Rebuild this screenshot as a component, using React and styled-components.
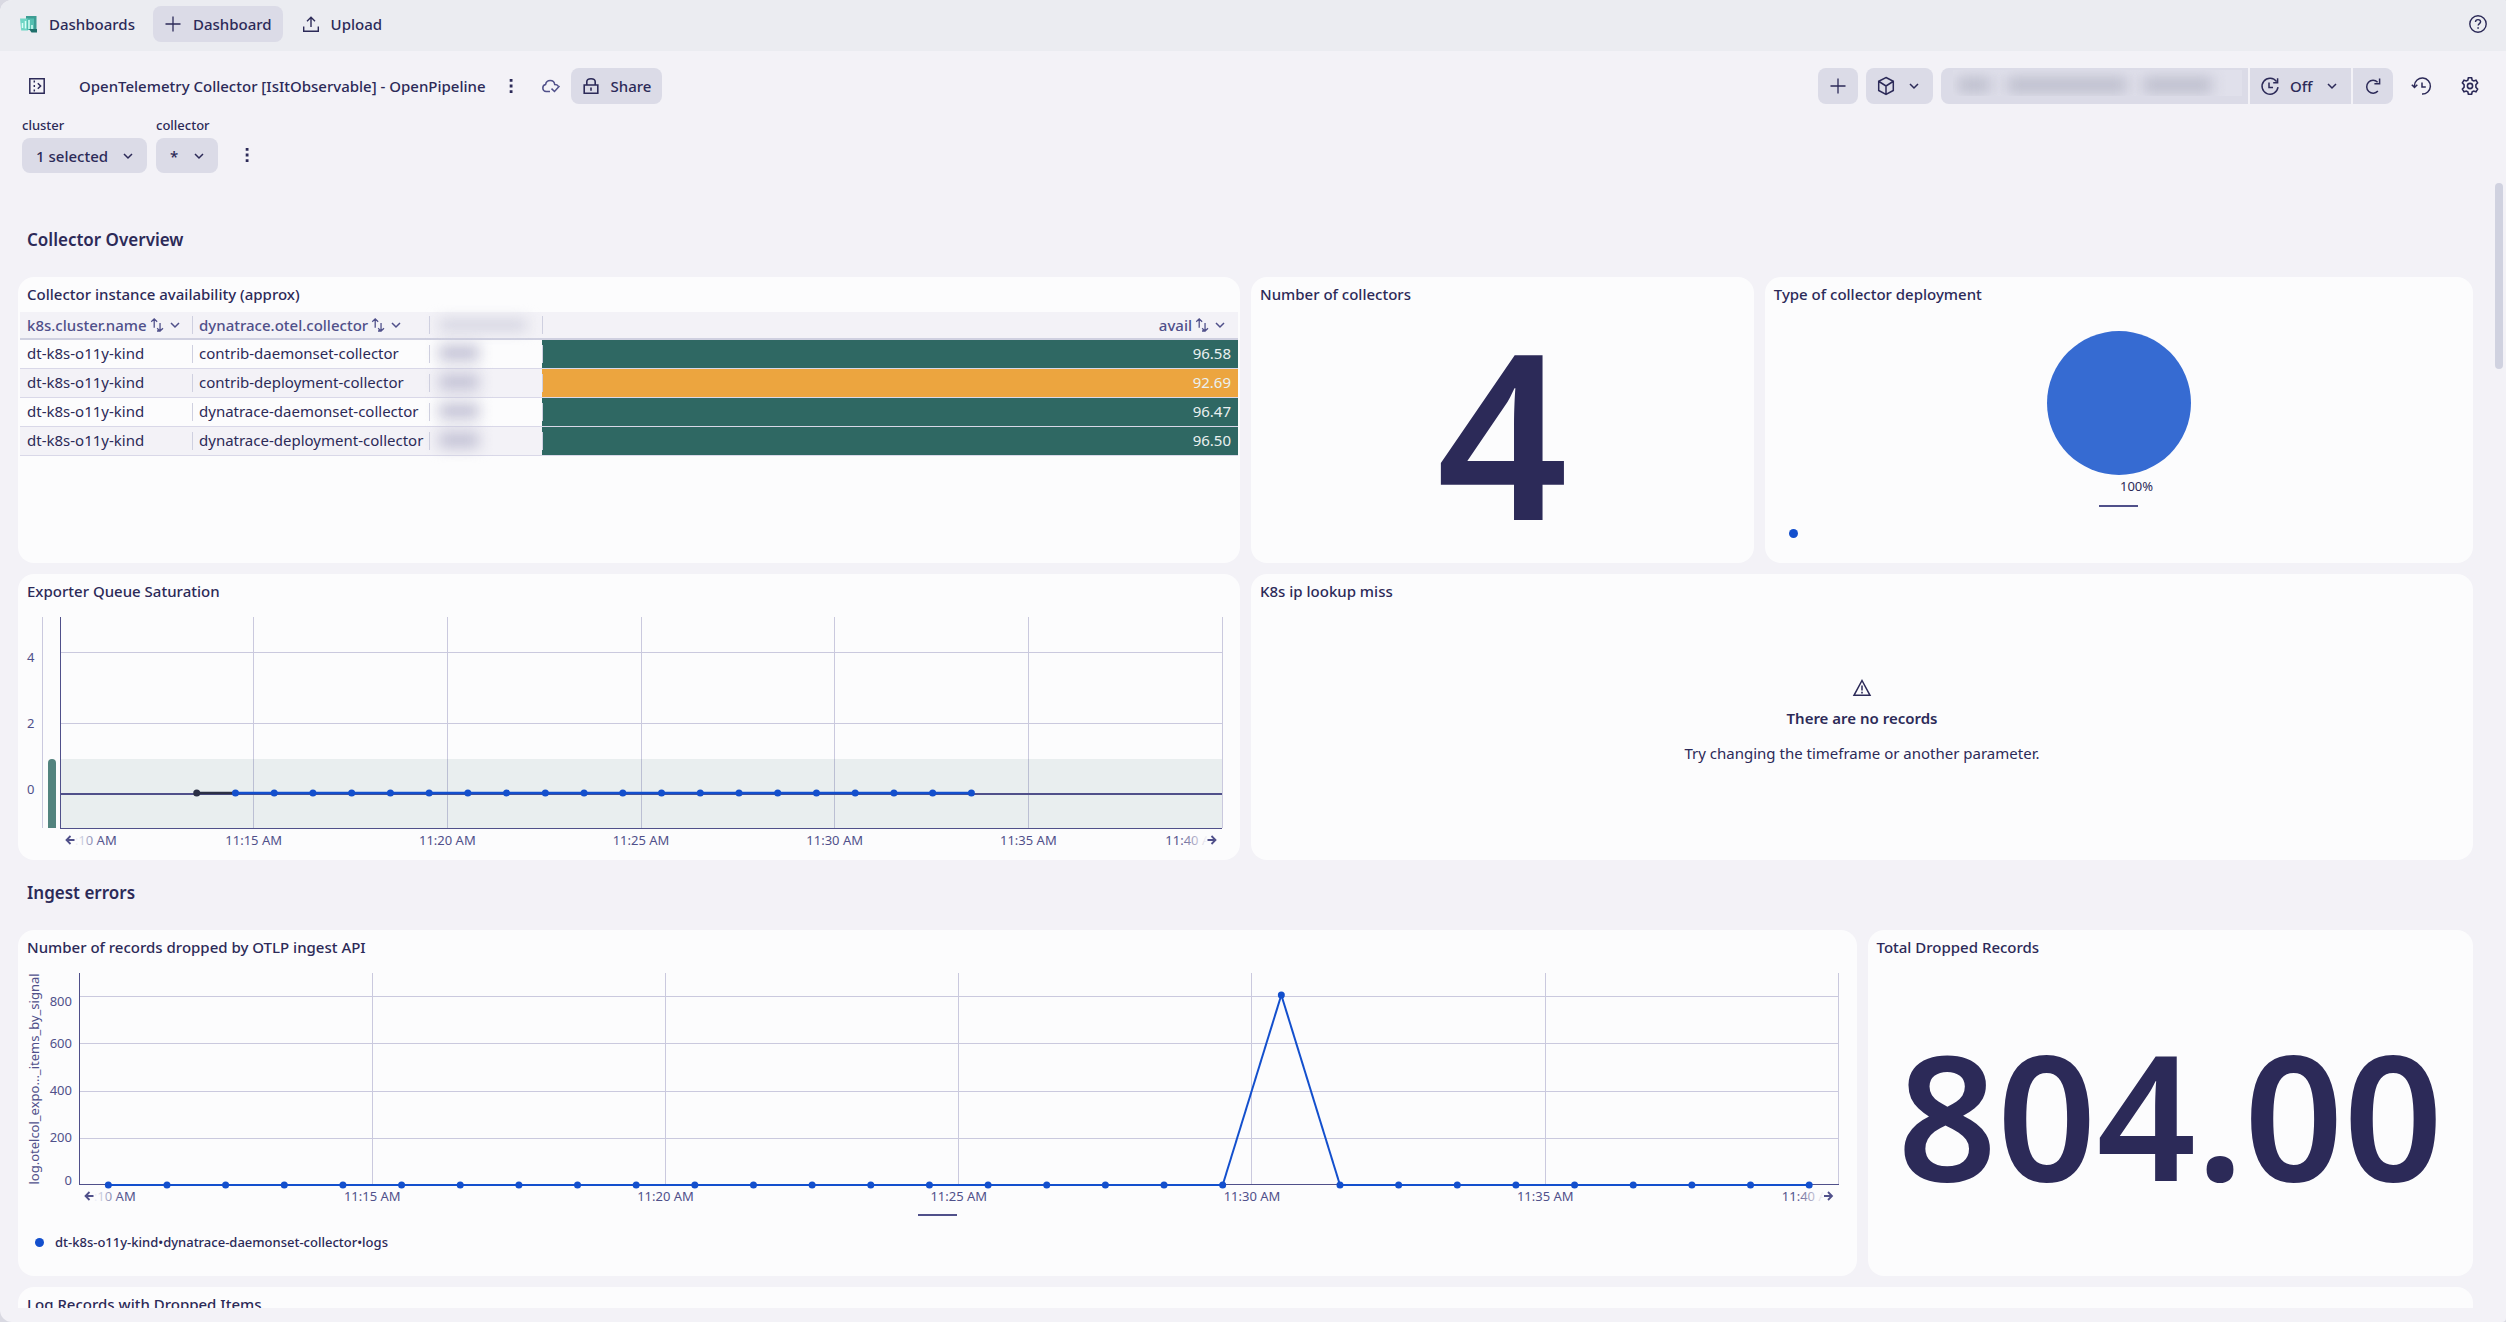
import styled, { createGlobalStyle } from 'styled-components';

const GlobalStyle = createGlobalStyle`
  :root {
    --ink: #2c2a58;
    --ink-soft: #50508a;
    --page: #f3f2f7;
    --topbar: #ebecf1;
    --tile: #fcfcfd;
    --control: #dbdbe7;
    --line: #cfd0e0;
    --grid: #cac9de;
    --blue: #134fcd;
    --green: #2f6863;
    --orange: #eca53f;
  }

  * {
    box-sizing: border-box;
  }

  body {
    margin: 0;
    background: #d9d9e2;
    color: var(--ink);
    font-family: 'Noto Sans', sans-serif;
    font-size: 15px;
    line-height: 20px;
  }

  button,
  select {
    font: inherit;
    color: inherit;
  }
`;

const AppFrame = styled.div`
  display: flex;
  flex-direction: column;
  height: 100vh;
  overflow: hidden;
  background: var(--page);
  border-radius: 12px 2px 4px 12px;
`;

const TopBar = styled.header`
  display: flex;
  align-items: center;
  gap: 8px;
  height: 51px;
  padding: 0 8px 3px;
  background: var(--topbar);
`;

const Spacer = styled.div`
  flex: 1;
`;

const AppLink = styled.a`
  display: flex;
  align-items: center;
  gap: 10px;
  height: 36px;
  padding: 0 10px 0 11px;
  color: inherit;
  font-weight: 500;
  text-decoration: none;
`;

const Button = styled.button`
  display: flex;
  align-items: center;
  justify-content: center;
  gap: 10px;
  height: 36px;
  padding: 0 11px 0 10px;
  border: 0;
  border-radius: ${({ $radius = '8px' }) => $radius};
  background: ${({ $quiet }) => ($quiet ? 'transparent' : 'var(--control)')};
  font-weight: 500;
`;

const IconButton = styled(Button)`
  width: 40px;
  padding: 0;
`;

const Toolbar = styled.div`
  display: flex;
  align-items: center;
  padding: 17px 16px 0 17px;
`;

const DashboardTitle = styled.h1`
  margin: 0 5px 0 22px;
  font-size: 15px;
  font-weight: 500;
`;

const ToolGroup = styled.div`
  display: flex;
  gap: ${({ $gap }) => $gap};
  margin-right: ${({ $after = '0' }) => $after};
`;

const Timeframe = styled(Button)`
  width: 307px;
  padding: 0 6px 6px 12px;
`;

const HiddenTime = styled.span`
  display: flex;
  flex: 1;
  align-items: center;
  gap: 16px;
  height: 26px;
  padding: 4px 30px 0 4px;
  background: rgba(255, 255, 255, 0.16);
  overflow: hidden;
`;

const Smudge = styled.span`
  flex: ${({ $grow = 1 }) => $grow};
  height: ${({ $height = '16px' }) => $height};
  background: ${({ $color = '#bdbecd' }) => $color};
  filter: blur(7px);
`;

const Filters = styled.div`
  display: flex;
  align-items: flex-end;
  gap: 9px;
  padding: 12px 22px 10px;
`;

const Field = styled.div`
  display: flex;
  flex-direction: column;
  gap: 4px;
`;

const FieldLabel = styled.label`
  font-size: 13px;
  font-weight: 500;
  line-height: 18px;
`;

/* icon, select and chevron share one grid cell */
const SelectShell = styled.span`
  display: grid;
  align-items: center;

  > * {
    grid-area: 1 / 1;
  }

  > svg {
    pointer-events: none;
    z-index: 1;
    justify-self: end;
    margin-right: 11px;
  }

  > svg.lead {
    justify-self: start;
    margin-left: 10px;
  }
`;

const Select = styled.select`
  appearance: none;
  width: ${({ $width }) => $width};
  height: ${({ $height = '35px' }) => $height};
  padding: 0 0 0 ${({ $inset = '14px' }) => $inset};
  border: 0;
  border-radius: ${({ $radius = '8px' }) => $radius};
  background: var(--control);
  font-weight: 500;
`;

const Scroller = styled.div`
  display: flex;
  flex: 1;
  min-height: 0;
  margin-bottom: 14px;
  overflow: hidden;
`;

const Board = styled.main`
  display: grid;
  flex: 1;
  grid-template-columns: repeat(24, minmax(0, 1fr));
  grid-template-rows: 48px 286px 286px 48px 346px 346px;
  gap: 11px;
  padding: 35px 22px 0 18px;
`;

const ScrollThumb = styled.div`
  width: 8px;
  height: 186px;
  margin-right: 3px;
  border-radius: 4px;
  background: #d0d2e0;
`;

const SectionTitle = styled.h2`
  grid-column: 1 / -1;
  margin: 0;
  padding-left: 9px;
  font-size: 17px;
  font-weight: 600;
  line-height: 43px;
`;

const TileBox = styled.section`
  display: flex;
  flex-direction: column;
  grid-column: span ${({ $span }) => $span};
  min-width: 0;
  border-radius: 16px;
  background: var(--tile);
`;

const TileTitle = styled.h3`
  margin: 0;
  padding: 0 0 1px 9px;
  font-size: 15px;
  font-weight: 500;
  line-height: 34px;
`;

const Table = styled.table`
  width: calc(100% - 4px);
  margin: 0 2px;
  border-collapse: separate;
  border-spacing: 0;
  table-layout: fixed;
`;

const cellRule = 'linear-gradient(var(--line), var(--line)) no-repeat left center / 1px 18px';

const HeadCell = styled.th`
  width: ${({ $width }) => $width};
  height: 28px;
  padding: 0 7px;
  border-bottom: 2px solid var(--line);
  background: ${({ $ruled }) => ($ruled ? `${cellRule}, var(--page)` : 'var(--page)')};
  color: var(--ink-soft);
  font-weight: 500;
  text-align: left;
`;

const HeadContent = styled.span`
  display: flex;
  align-items: center;
  justify-content: ${({ $end }) => ($end ? 'flex-end' : 'flex-start')};
  gap: 2px;
  padding-right: ${({ $end }) => ($end ? '3px' : '0')};
`;

const Row = styled.tr`
  background: ${({ $striped }) => ($striped ? 'var(--page)' : 'var(--tile)')};
`;

const Cell = styled.td`
  height: 29px;
  padding: 0 7px 2px;
  border-bottom: 1px solid #d9d8e8;
  background: ${({ $ruled }) => ($ruled ? cellRule : 'none')};
  white-space: nowrap;
`;

const ValueCell = styled(Cell)`
  background: ${({ $color }) => `${cellRule}, ${$color}`};
  color: #eaf0f0;
  text-align: right;
`;

const MaskedCell = styled.span`
  display: flex;
  width: ${({ $wide }) => ($wide ? '88px' : '40px')};
  margin-left: 3px;
`;

const BigNumber = styled.div`
  display: flex;
  flex: 1;
  align-items: center;
  justify-content: center;
  padding-bottom: 14px;
  font-size: ${({ $size }) => $size};
  font-weight: 600;
  line-height: 1;
`;

const PieBody = styled.div`
  display: flex;
  flex-direction: column;
  align-items: center;
  padding-top: 19px;
`;

const Handle = styled.div`
  align-self: center;
  width: 39px;
  height: 2px;
  margin-top: ${({ $top }) => $top};
  background: #50508a;
`;

const Legend = styled.div`
  display: flex;
  align-items: center;
  gap: 11px;
  min-height: 20px;
  margin: 16px 0 0 ${({ $left }) => $left};
  font-size: 13px;
  font-weight: 500;
`;

const Dot = styled.span`
  width: 9px;
  height: 9px;
  border-radius: 50%;
  background: var(--blue);
`;

const EmptyState = styled.div`
  display: flex;
  flex: 1;
  flex-direction: column;
  align-items: center;
  padding-top: 69px;

  p {
    margin: 15px 0 0;
  }

  strong {
    margin-top: 10px;
    font-weight: 600;
  }
`;

const ChartBody = styled.div`
  padding: 8px 18px 0 ${({ $left }) => $left};
`;

const Plot = styled.svg`
  display: block;
  width: 100%;
  height: 235px;
  overflow: visible;
  font-size: 13px;
  fill: var(--ink-soft);
`;

const Svg = ({ size = 20, children, ...rest }) => (
  <svg
    width={size}
    height={size}
    viewBox="0 0 20 20"
    fill="none"
    stroke="currentColor"
    strokeWidth="1.5"
    aria-hidden="true"
    {...rest}
  >
    {children}
  </svg>
);

const LogoIcon = () => (
  <Svg stroke="none">
    <path d="M7 2h10.500v13H7z" fill="#3d9c93" />
    <path d="M1 4.500h8v12H2.200z" fill="#6fd6c5" />
    <path d="M8 4.500h7v11.500H8z" fill="#54bfb1" />
    <path d="M10 15h8v3.500h-5.500z" fill="#1f6f6b" />
    <path d="M3.500 9v5M6.500 7v7.500M10 6v9M13 11v4" stroke="#d9fff6" strokeWidth="1.500" />
  </Svg>
);

const PlusIcon = () => (
  <Svg strokeWidth="1.300">
    <path d="M10 2.500v15M2.500 10h15" />
  </Svg>
);

const UploadIcon = () => (
  <Svg strokeWidth="1.400">
    <path d="M10 13V3.500M6 7.200l4-4 4 4M2.700 12.500v4.800h14.600v-4.800" />
  </Svg>
);

const HelpIcon = () => (
  <Svg strokeWidth="1.400">
    <circle cx="10" cy="10" r="8.200" />
    <path d="M7.500 8c0-1.500 1-2.400 2.500-2.400s2.600.9 2.600 2.200c0 1.700-2.400 1.900-2.400 3.700" />
    <path d="M9.300 13.200h1.600v1.600H9.300z" fill="currentColor" stroke="none" />
  </Svg>
);

const PanelIcon = () => (
  <Svg strokeWidth="1.500">
    <path d="M2.800 2.800h14.400v14.400H2.800z" />
    <path d="M7.300 4.500v12" strokeDasharray="2 2.500" />
    <path d="M10.800 7.200l2.800 2.800-2.800 2.800" />
  </Svg>
);

const KebabIcon = () => (
  <Svg fill="currentColor" stroke="none">
    <path d="M8.700 3h2.800v2.800H8.700zM8.700 8.600h2.800v2.800H8.700zM8.700 14.200h2.800V17H8.700z" />
  </Svg>
);

const CloudIcon = () => (
  <Svg stroke="#50508a" strokeWidth="1.500">
    <path d="M9 15.500H5.200a3.600 3.600 0 0 1-.6-7.100C5 5.900 6.900 4.400 9.200 4.400c2.400 0 4.300 1.700 4.500 4.100 1.600 0 3 .7 3.700 1.800" />
    <path d="M10.500 12.600l3 2.900 5-5.500" />
  </Svg>
);

const LockIcon = () => (
  <Svg strokeWidth="1.600">
    <path d="M3.200 9h13.600v8.300H3.200zM5.800 9V5.800c0-2 1.500-3.100 4.200-3.100s4.200 1.100 4.200 3.100V9M10 11.500v3.300" />
  </Svg>
);

const CubeIcon = () => (
  <Svg strokeWidth="1.500">
    <path d="M10 1.500l7.300 3.800v9.200l-7.300 4-7.300-4V5.300zM3 5.500L10 10l7-4.500M10 10v8.300" />
  </Svg>
);

const TimerIcon = (props) => (
  <Svg strokeWidth="1.500" {...props}>
    <path d="M16.600 5.600A8 8 0 1 0 18 11.200M17.600 2.300v4.400h-4.400M9 6.500v5h4" />
  </Svg>
);

const RefreshIcon = () => (
  <Svg strokeWidth="1.500">
    <path d="M14.600 6.200A6.400 6.400 0 1 0 14.900 15M16.600 2.500v5.200h-5.200" />
  </Svg>
);

const HistoryIcon = () => (
  <Svg strokeWidth="1.500" overflow="visible">
    <path d="M10 18a8 8 0 1 0-7.600-8.500v1.800M-.2 8.800l2.700 2.700 2.800-2.700M10 6.500v4.500h3.800" />
  </Svg>
);

const GearIcon = () => (
  <Svg strokeWidth="1.600">
    <path d="M8.400 1.800h3.200l.6 2.400 1.500.8 2.300-.8 1.600 2.700-1.700 1.800v2.600l1.700 1.800-1.600 2.700-2.300-.8-1.500.8-.6 2.400H8.400l-.6-2.400-1.500-.8-2.300.8-1.600-2.700 1.700-1.800V8.700L2.400 6.900 4 4.200l2.300.8 1.500-.8z" />
    <circle cx="10" cy="10" r="2.600" />
  </Svg>
);

const ChevronIcon = () => (
  <Svg size={16} strokeWidth="1.900">
    <path d="M5 7.500l5 5 5-5" />
  </Svg>
);

const SortIcon = () => (
  <Svg size={16} strokeWidth="1.600">
    <path d="M6.500 13.500v-11M2.800 6l3.700-3.700L10.200 6M10 17.500h4M13.800 7.500v10M10.200 14l3.600 3.600 3.700-3.600" />
  </Svg>
);

const WarningIcon = () => (
  <Svg strokeWidth="1.500">
    <path d="M10 2.500l8 14.800H2zM10 7.500v5" />
    <path d="M9.200 13.800h1.600v1.600H9.200z" fill="currentColor" stroke="none" />
  </Svg>
);

const Tile = ({ title, span, children }) => (
  <TileBox $span={span}>
    <TileTitle>{title}</TileTitle>
    {children}
  </TileBox>
);

const SPAN_MINUTES = 30;
const PLOT_HEIGHT = 211;
const TICKS = [5, 10, 15, 20, 25];
const at = (minute) => `${(minute / SPAN_MINUTES) * 100}%`;

const TimeAxis = ({ id }) => (
  <g>
    <defs>
      <linearGradient id={`${id}-in`}>
        <stop offset="0.25" stopColor="#50508a" stopOpacity="0" />
        <stop offset="0.75" stopColor="#50508a" />
      </linearGradient>
      <linearGradient id={`${id}-out`}>
        <stop offset="0.25" stopColor="#50508a" />
        <stop offset="0.75" stopColor="#50508a" stopOpacity="0" />
      </linearGradient>
    </defs>
    <text x="0" y="228" fill={`url(#${id}-in)`}>
      11:10 AM
    </text>
    {TICKS.map((minute) => (
      <text key={minute} x={at(minute)} y="228" textAnchor="middle">
        {`11:${10 + minute} AM`}
      </text>
    ))}
    <text x="100%" y="228" textAnchor="end" fill={`url(#${id}-out)`}>
      11:40 AM
    </text>
    <path d="M14.500 223H7M10.500 219l-4 4 4 4" fill="none" stroke="#50508a" strokeWidth="1.800" />
    <svg x="100%" overflow="visible">
      <path d="M-14.500 223H-7M-10.500 219l4 4-4 4" fill="none" stroke="#50508a" strokeWidth="1.800" />
    </svg>
  </g>
);

const Grid = ({ rows }) => (
  <g stroke="var(--grid)" shapeRendering="crispEdges">
    {rows.map((y) => (
      <line key={y} x1="0" x2="100%" y1={y} y2={y} />
    ))}
    {[...TICKS, SPAN_MINUTES].map((minute) => (
      <line key={minute} x1={at(minute)} x2={at(minute)} y1="0" y2={PLOT_HEIGHT} />
    ))}
  </g>
);

const Series = ({ points, width }) => (
  <g>
    {points.slice(1).map((point, i) => (
      <line
        key={point.minute}
        x1={at(points[i].minute)}
        y1={points[i].y}
        x2={at(point.minute)}
        y2={point.y}
        stroke={points[i].color}
        strokeWidth={width}
      />
    ))}
    {points.map((point) => (
      <circle key={point.minute} cx={at(point.minute)} cy={point.y} r="3.500" fill={point.color} />
    ))}
  </g>
);

const saturationPoints = Array.from({ length: 21 }, (_, i) => ({
  minute: i + 3.53,
  y: 176,
  color: i === 0 ? '#2b2f45' : '#134fcd',
}));

const droppedPoints = Array.from({ length: 30 }, (_, i) => ({
  minute: i + 0.5,
  y: i === 20 ? 22 : 212,
  color: '#134fcd',
}));

const SaturationChart = () => (
  <ChartBody $left="42px">
    <Plot role="img" aria-label="Exporter Queue Saturation">
      <Grid rows={[35, 106]} />
      <rect x="0" y="142" width="100%" height="69" fill="var(--green)" opacity="0.09" />
      <path d="M-17.500 0v211" stroke="var(--grid)" />
      <path d="M-12 211v-65a4 4 0 0 1 8 0v65z" fill="#52837e" />
      <line x1="0" x2="100%" y1="177" y2="177" stroke="#50508a" strokeWidth="2" />
      <path d="M0 0v211" stroke="#50508a" shapeRendering="crispEdges" />
      <line x1="0" x2="100%" y1="211" y2="211" stroke="#50508a" shapeRendering="crispEdges" />
      <text x="-33" y="45">4</text>
      <text x="-33" y="111">2</text>
      <text x="-33" y="177">0</text>
      <Series points={saturationPoints} width="2.500" />
      <TimeAxis id="saturation" />
    </Plot>
  </ChartBody>
);

const droppedLabels = [
  [800, 33],
  [600, 75],
  [400, 122],
  [200, 169],
  [0, 212],
];

const DroppedChart = () => (
  <ChartBody $left="61px">
    <Plot role="img" aria-label="Number of records dropped by OTLP ingest API">
      <Grid rows={[23, 70, 118, 165]} />
      <path d="M0 0v211" stroke="#50508a" shapeRendering="crispEdges" />
      <line x1="0" x2="100%" y1="211" y2="211" stroke="#50508a" shapeRendering="crispEdges" />
      {droppedLabels.map(([label, y]) => (
        <text key={label} x="-7" y={y} textAnchor="end">
          {label}
        </text>
      ))}
      <text transform="translate(-40 106) rotate(-90)" textAnchor="middle">
        log.otelcol_expo..._items_by_signal
      </text>
      <Series points={droppedPoints} width="2" />
      <TimeAxis id="dropped" />
    </Plot>
  </ChartBody>
);

const collectors = [
  { name: 'contrib-daemonset-collector', avail: '96.58', color: 'var(--green)' },
  { name: 'contrib-deployment-collector', avail: '92.69', color: 'var(--orange)' },
  { name: 'dynatrace-daemonset-collector', avail: '96.47', color: 'var(--green)' },
  { name: 'dynatrace-deployment-collector', avail: '96.50', color: 'var(--green)' },
];

const AvailabilityTable = () => (
  <Table>
    <thead>
      <tr>
        <HeadCell $width="172px">
          <HeadContent>
            k8s.cluster.name <SortIcon /> <ChevronIcon />
          </HeadContent>
        </HeadCell>
        <HeadCell $width="237px" $ruled>
          <HeadContent>
            dynatrace.otel.collector <SortIcon /> <ChevronIcon />
          </HeadContent>
        </HeadCell>
        <HeadCell $width="113px" $ruled>
          <MaskedCell $wide>
            <Smudge $height="12px" $color="#d3d3e0" />
          </MaskedCell>
        </HeadCell>
        <HeadCell $ruled>
          <HeadContent $end>
            avail <SortIcon /> <ChevronIcon />
          </HeadContent>
        </HeadCell>
      </tr>
    </thead>
    <tbody>
      {collectors.map((collector, i) => (
        <Row key={collector.name} $striped={i % 2 === 1}>
          <Cell>dt-k8s-o11y-kind</Cell>
          <Cell $ruled>{collector.name}</Cell>
          <Cell $ruled>
            <MaskedCell>
              <Smudge $color="#c3c2d5" />
            </MaskedCell>
          </Cell>
          <ValueCell $color={collector.color}>{collector.avail}</ValueCell>
        </Row>
      ))}
    </tbody>
  </Table>
);

const DeploymentPie = () => (
  <>
    <PieBody>
      <svg width="144" height="166" role="img" aria-label="Type of collector deployment">
        <circle cx="72" cy="72" r="72" fill="#366bd2" />
        <text x="73" y="160" fontSize="13" fill="var(--ink)">
          100%
        </text>
      </svg>
      <Handle $top="8px" />
    </PieBody>
    <Legend $left="24px">
      <Dot />
    </Legend>
  </>
);

const Header = () => (
  <TopBar>
    <AppLink href="#dashboards">
      <LogoIcon />
      Dashboards
    </AppLink>
    <Button>
      <PlusIcon />
      Dashboard
    </Button>
    <Button $quiet>
      <UploadIcon />
      Upload
    </Button>
    <Spacer />
    <IconButton $quiet aria-label="Help">
      <HelpIcon />
    </IconButton>
  </TopBar>
);

const DashboardToolbar = () => (
  <Toolbar>
    <IconButton $quiet aria-label="Toggle panel">
      <PanelIcon />
    </IconButton>
    <DashboardTitle>OpenTelemetry Collector [IsItObservable] - OpenPipeline</DashboardTitle>
    <IconButton $quiet aria-label="More">
      <KebabIcon />
    </IconButton>
    <IconButton $quiet aria-label="Saved">
      <CloudIcon />
    </IconButton>
    <Button>
      <LockIcon />
      Share
    </Button>
    <Spacer />
    <ToolGroup $gap="8px" $after="8px">
      <IconButton aria-label="Add">
        <PlusIcon />
      </IconButton>
      <Button aria-label="Segments">
        <CubeIcon />
        <ChevronIcon />
      </Button>
    </ToolGroup>
    <ToolGroup $gap="2px" $after="9px">
      <Timeframe $radius="8px 0 0 8px" aria-label="Timeframe">
        <HiddenTime>
          <Smudge $grow={2} />
          <Smudge $grow={7} />
          <Smudge $grow={4} />
        </HiddenTime>
      </Timeframe>
      <SelectShell>
        <TimerIcon className="lead" />
        <Select
          $width="101px"
          $height="36px"
          $radius="0"
          $inset="40px"
          aria-label="Auto refresh"
          defaultValue="Off"
        >
          <option>Off</option>
        </Select>
        <ChevronIcon />
      </SelectShell>
      <IconButton $radius="0 8px 8px 0" aria-label="Refresh">
        <RefreshIcon />
      </IconButton>
    </ToolGroup>
    <ToolGroup $gap="8px">
      <IconButton $quiet aria-label="Version history">
        <HistoryIcon />
      </IconButton>
      <IconButton $quiet aria-label="Settings">
        <GearIcon />
      </IconButton>
    </ToolGroup>
  </Toolbar>
);

const VariableFilters = () => (
  <Filters>
    <Field>
      <FieldLabel htmlFor="cluster">cluster</FieldLabel>
      <SelectShell>
        <Select id="cluster" $width="125px" defaultValue="1 selected">
          <option>1 selected</option>
        </Select>
        <ChevronIcon />
      </SelectShell>
    </Field>
    <Field>
      <FieldLabel htmlFor="collector">collector</FieldLabel>
      <SelectShell>
        <Select id="collector" $width="62px" defaultValue="*">
          <option>*</option>
        </Select>
        <ChevronIcon />
      </SelectShell>
    </Field>
    <IconButton $quiet aria-label="Variable options">
      <KebabIcon />
    </IconButton>
  </Filters>
);

const App = () => {
  return (
    <>
      <GlobalStyle />
      <AppFrame>
        <Header />
        <DashboardToolbar />
        <VariableFilters />
        <Scroller>
          <Board>
            <SectionTitle>Collector Overview</SectionTitle>
            <Tile title="Collector instance availability (approx)" span={12}>
              <AvailabilityTable />
            </Tile>
            <Tile title="Number of collectors" span={5}>
              <BigNumber $size="230px">4</BigNumber>
            </Tile>
            <Tile title="Type of collector deployment" span={7}>
              <DeploymentPie />
            </Tile>
            <Tile title="Exporter Queue Saturation" span={12}>
              <SaturationChart />
            </Tile>
            <Tile title="K8s ip lookup miss" span={12}>
              <EmptyState>
                <WarningIcon />
                <strong>There are no records</strong>
                <p>Try changing the timeframe or another parameter.</p>
              </EmptyState>
            </Tile>
            <SectionTitle>Ingest errors</SectionTitle>
            <Tile title="Number of records dropped by OTLP ingest API" span={18}>
              <DroppedChart />
              <Handle $top="6px" />
              <Legend $left="17px">
                <Dot />
                dt-k8s-o11y-kind•dynatrace-daemonset-collector•logs
              </Legend>
            </Tile>
            <Tile title="Total Dropped Records" span={6}>
              <BigNumber $size="174px">804.00</BigNumber>
            </Tile>
            <Tile title="Log Records with Dropped Items" span={24} />
          </Board>
          <ScrollThumb />
        </Scroller>
      </AppFrame>
    </>
  );
};

export default App;
